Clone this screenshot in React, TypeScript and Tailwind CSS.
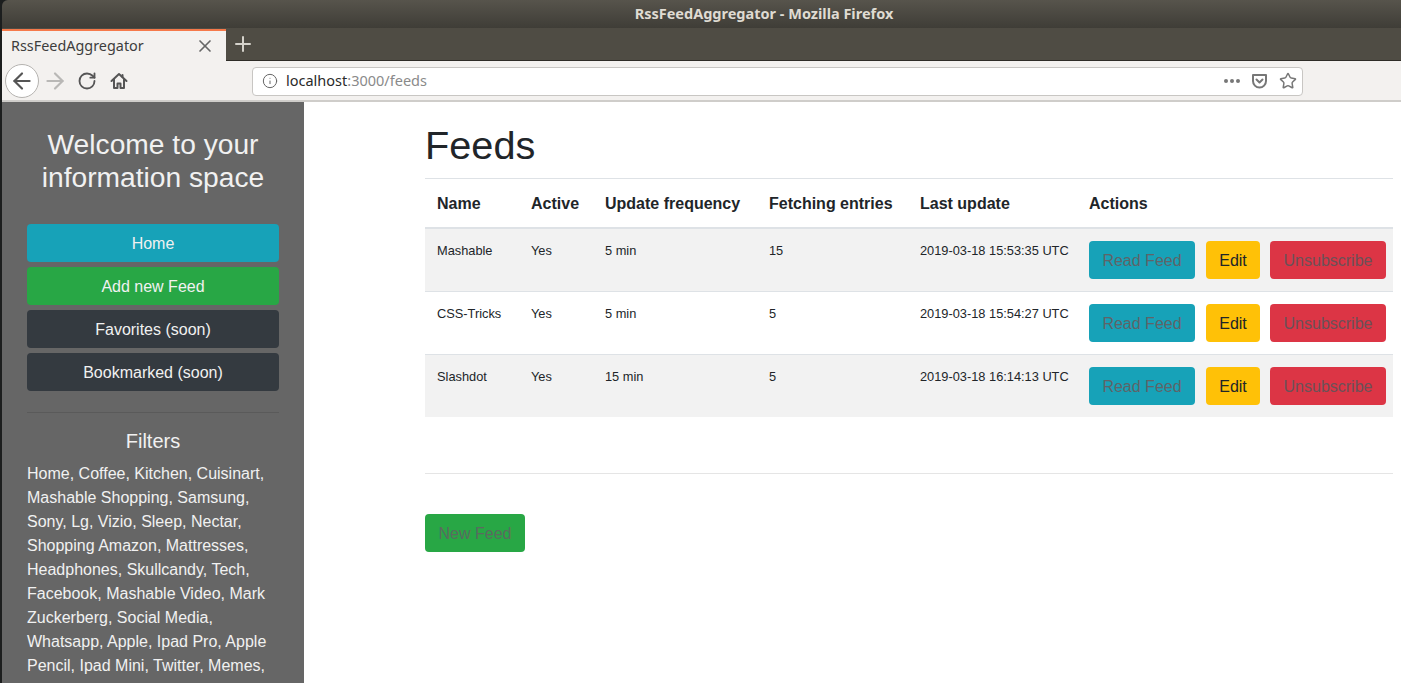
import { ArrowLeft, ArrowRight, RotateCw, X, Plus, Info, Star } from "lucide-react";

const feeds = [
  { name: "Mashable", freq: "5 min", entries: "15", updated: "2019-03-18 15:53:35 UTC", bg: "bg-[#f2f2f2]" },
  { name: "CSS-Tricks", freq: "5 min", entries: "5", updated: "2019-03-18 15:54:27 UTC", bg: "bg-white" },
  { name: "Slashdot", freq: "15 min", entries: "5", updated: "2019-03-18 16:14:13 UTC", bg: "bg-[#f2f2f2]" },
];

function Browser() {
  return (
    <div className="shrink-0 font-['Noto_Sans',sans-serif]">
      <div className="h-[28px] rounded-tl-[6px] bg-gradient-to-b from-[#57544c] to-[#3f3d37] flex items-center justify-center pl-[125px] text-[14.5px] font-bold text-[#dfdbd2]">
        RssFeedAggregator - Mozilla Firefox
      </div>
      <div className="h-[33px] bg-[#4f4c44] flex border-b border-[#2e2c27]">
        <div className="w-[224px] h-[32px] mt-[1px] bg-[#f3f1ef] border-t-2 border-[#f5794a] flex items-center justify-between pl-[9px] pr-[11px] text-[14.4px] text-[#3d3d3d]">
          <span>RssFeedAggregator</span>
          <X size={20} strokeWidth={2} className="text-[#666]" />
        </div>
        <div className="w-[34px] flex items-center justify-center">
          <Plus size={24} strokeWidth={2} className="text-[#d5d2cb]" />
        </div>
      </div>
      <div className="h-[41px] bg-[#f3f1ef] border-b-2 border-[#cfcdca] flex items-center pt-[1px] pl-[3px] pr-[98px]">
        <div className="w-[34px] h-[34px] rounded-full bg-white border border-[#b5b3b0] flex items-center justify-center shrink-0">
          <ArrowLeft size={26} strokeWidth={2} className="text-[#555]" />
        </div>
        <ArrowRight size={26} strokeWidth={2} className="ml-[3px] text-[#b9b8b6] shrink-0" />
        <RotateCw size={20} strokeWidth={2.2} className="ml-[9px] text-[#555] shrink-0" />
        <svg width="18" height="18" viewBox="0 0 18 18" fill="none" stroke="#555" strokeWidth="2" strokeLinejoin="round" strokeLinecap="round" className="ml-[13px] shrink-0">
          <path d="M1.500 9L9 2l7.500 7" />
          <path d="M4 7.500V16h3.500v-4.500h3V16H14V7.500" />
          <path d="M12.500 3v2" />
        </svg>
        <div className="ml-[124px] flex-1 h-[29px] bg-white border border-[#c8c6c3] rounded-[4px] flex items-center pl-[9px] pr-[5px]">
          <Info size={16} strokeWidth={1.5} className="text-[#666] shrink-0" />
          <span className="ml-[8px] text-[14.5px] text-[#2a2a2a]">localhost<span className="text-[#8a8a8a]">:3000/feeds</span></span>
          <div className="ml-auto flex items-center gap-[11px] text-[#777]">
            <div className="flex gap-[2px]">
              <span className="w-[4px] h-[4px] rounded-full bg-[#777]" />
              <span className="w-[4px] h-[4px] rounded-full bg-[#777]" />
              <span className="w-[4px] h-[4px] rounded-full bg-[#777]" />
            </div>
            <svg width="17" height="16" viewBox="0 0 17 16" fill="none" stroke="currentColor" strokeWidth="2">
              <path d="M2 2h13v6a6.500 6.500 0 0 1-13 0z" strokeLinejoin="round" />
              <path d="M5.500 6.500l3 3 3-3" strokeLinecap="round" strokeLinejoin="round" />
            </svg>
            <Star size={18} strokeWidth={2} />
          </div>
        </div>
      </div>
    </div>
  );
}

function Sidebar() {
  return (
    <aside className="w-[302px] shrink-0 bg-[#666666] px-[25px] pt-[26px] text-[#f1f1f1] overflow-hidden">
      <h2 className="text-[28.2px] leading-[33px] text-center px-2">Welcome to your information space</h2>
      <div className="mt-[30px] flex flex-col gap-[5px]">
        <div className="h-[38px] pt-[1px] rounded bg-[#17a2b8] flex items-center justify-center">Home</div>
        <div className="h-[38px] pt-[1px] rounded bg-[#28a745] flex items-center justify-center">Add new Feed</div>
        <div className="h-[38px] pt-[1px] rounded bg-[#343a40] flex items-center justify-center">Favorites (soon)</div>
        <div className="h-[38px] pt-[1px] rounded bg-[#343a40] flex items-center justify-center">Bookmarked (soon)</div>
      </div>
      <hr className="mt-[21px] border-[#5a5a5a]" />
      <h3 className="mt-[16px] text-[20px] leading-[24px] text-center">Filters</h3>
      <p className="mt-[9px] leading-[24px]">
        Home, Coffee, Kitchen, Cuisinart, Mashable Shopping, Samsung, Sony, Lg, Vizio, Sleep, Nectar, Shopping Amazon, Mattresses, Headphones, Skullcandy, Tech, Facebook, Mashable Video, Mark Zuckerberg, Social Media, Whatsapp, Apple, Ipad Pro, Apple Pencil, Ipad Mini, Twitter, Memes,
      </p>
    </aside>
  );
}

function Actions() {
  return (
    <div className="flex text-base">
      <span className="shrink-0 w-[106px] h-[38px] pt-[1px] rounded bg-[#17a2b8] text-[#5f6468] flex items-center justify-center">Read Feed</span>
      <span className="shrink-0 ml-[11px] w-[54px] h-[38px] pt-[1px] rounded bg-[#ffc107] text-[#212529] flex items-center justify-center">Edit</span>
      <span className="shrink-0 ml-[10px] w-[116px] h-[38px] pt-[1px] rounded bg-[#dc3545] text-[#6b5158] flex items-center justify-center">Unsubscribe</span>
    </div>
  );
}

function FeedsTable() {
  return (
    <table className="w-full table-fixed border-collapse text-[#212529]">
      <thead>
        <tr className="h-[49px] border-t border-b-2 border-[#dee2e6] text-left">
          <th className="w-[94px] px-3 pt-[3px] font-bold">Name</th>
          <th className="w-[74px] px-3 pt-[3px] font-bold">Active</th>
          <th className="w-[164px] px-3 pt-[3px] font-bold">Update frequency</th>
          <th className="w-[151px] px-3 pt-[3px] font-bold">Fetching entries</th>
          <th className="w-[169px] px-3 pt-[3px] font-bold">Last update</th>
          <th className="px-3 pt-[3px] font-bold">Actions</th>
        </tr>
      </thead>
      <tbody className="text-[12.8px] leading-[19px]">
        {feeds.map((feed, i) => (
          <tr key={feed.name} className={`h-[63px] first:h-[64px] last:h-[62px] border-t border-[#dee2e6] first:border-t-0 ${feed.bg}`}>
            <td className="px-3 pt-[12px] align-top">{feed.name}</td>
            <td className="px-3 pt-[12px] align-top">Yes</td>
            <td className="px-3 pt-[12px] align-top">{feed.freq}</td>
            <td className="px-3 pt-[12px] align-top">{feed.entries}</td>
            <td className="px-3 pt-[12px] align-top whitespace-nowrap">{feed.updated}</td>
            <td className={`pl-3 pr-0 align-top ${i === 0 ? "pt-[12.5px]" : "pt-[12px]"}`}><Actions /></td>
          </tr>
        ))}
      </tbody>
    </table>
  );
}

export default function App() {
  return (
    <div className="w-[1401px] h-[683px] overflow-hidden flex flex-col pl-[2px] bg-[#1c1e1e] font-['Liberation_Sans',sans-serif] text-base">
      <Browser />
      <div className="flex flex-1 min-h-0">
        <Sidebar />
        <main className="flex-1 bg-white pl-[121px] pr-[8px] pt-[20px] text-[#212529]">
          <h1 className="text-[39.7px] leading-[47px] mb-[9px]">Feeds</h1>
          <FeedsTable />
          <hr className="mt-[56px] border-[#e5e5e5]" />
          <div className="mt-[40px] w-[100px] h-[38px] pt-[2px] rounded bg-[#28a745] text-[#5a6b5f] flex items-center justify-center">New Feed</div>
        </main>
      </div>
    </div>
  );
}
